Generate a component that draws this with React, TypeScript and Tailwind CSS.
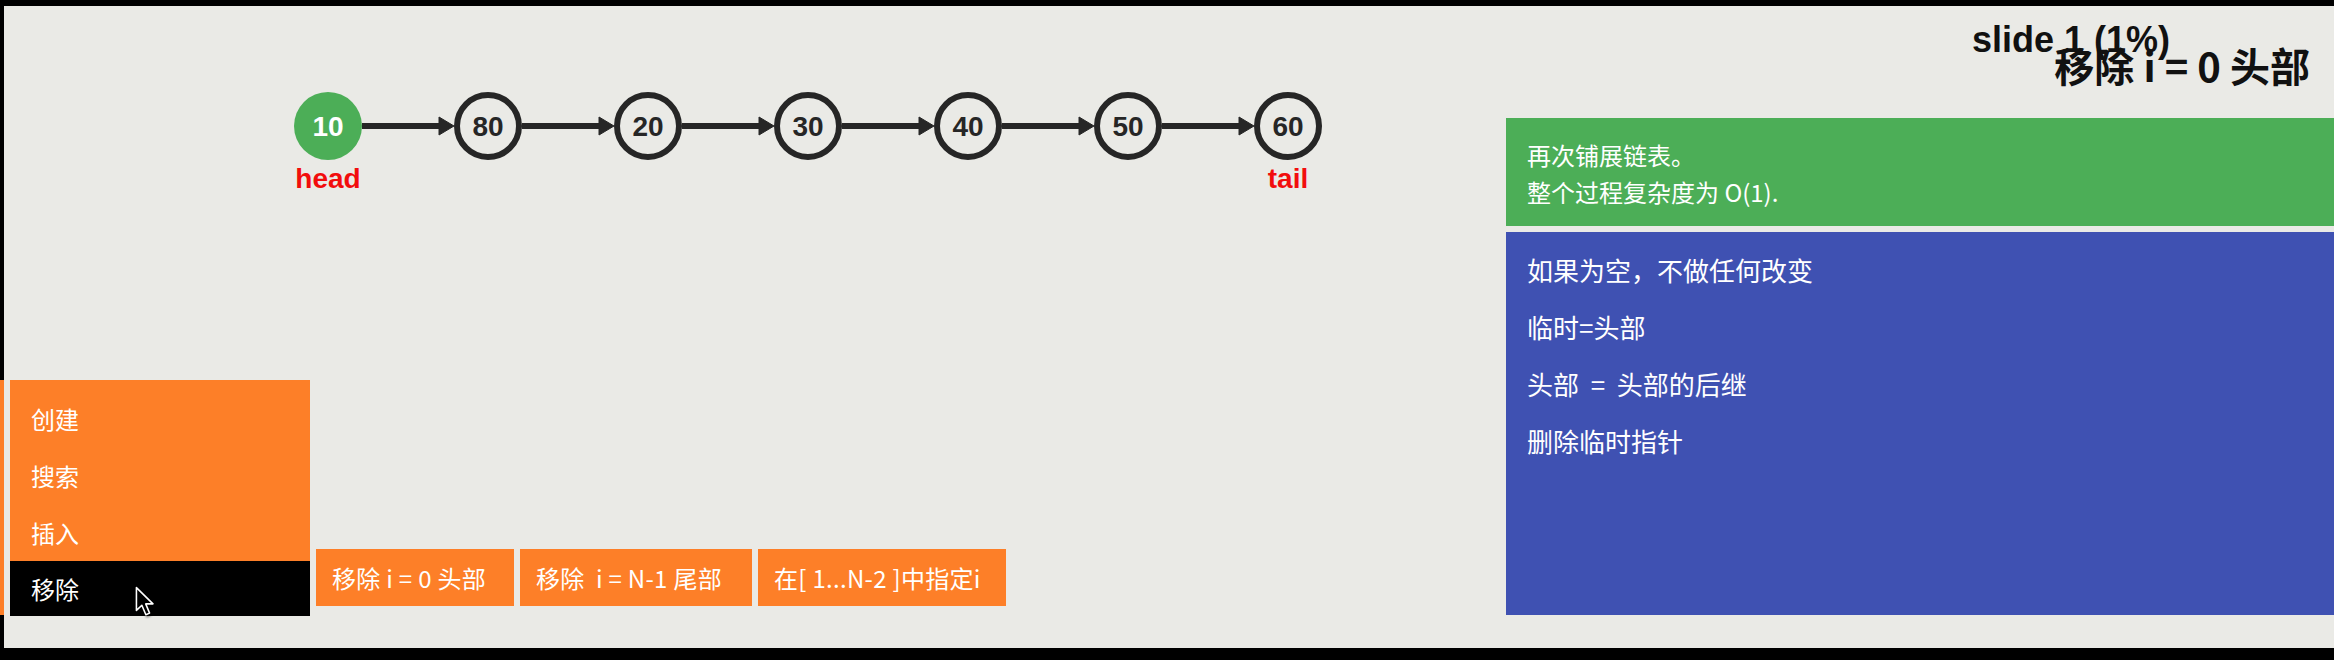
const nodes = [10, 80, 20, 30, 40, 50, 60];
const NODE_X0 = 328;
const NODE_GAP = 160;
const NODE_Y = 126;

const menuItems = ['创建', '搜索', '插入'];

const actions = [
  { label: '移除 i = 0 头部', w: 'w-[198px]' },
  { label: '移除  i = N-1 尾部', w: 'w-[232px]' },
  { label: '在[ 1...N-2 ]中指定i', w: 'w-[248px]' },
];

const steps = ['如果为空，不做任何改变', '临时=头部', '头部  =  头部的后继', '删除临时指针'];

function LinkedList() {
  return (
    <svg width={1502} height={220} viewBox="4 6 1502 220" className="block">
      {nodes.slice(0, -1).map((_, i) => {
        const x1 = NODE_X0 + i * NODE_GAP + 34;
        const tip = NODE_X0 + (i + 1) * NODE_GAP - 34;
        return (
          <g key={i} fill="#262626" stroke="#262626">
            <line x1={x1} y1={NODE_Y} x2={tip - 13} y2={NODE_Y} strokeWidth={6} />
            <polygon points={`${tip - 15},${NODE_Y - 9} ${tip},${NODE_Y} ${tip - 15},${NODE_Y + 9}`} strokeWidth={1} />
          </g>
        );
      })}
      {nodes.map((v, i) => {
        const cx = NODE_X0 + i * NODE_GAP;
        const head = i === 0;
        return (
          <g key={v}>
            {head ? (
              <circle cx={cx} cy={NODE_Y} r={34} fill="#4cae57" />
            ) : (
              <circle cx={cx} cy={NODE_Y} r={31} fill="#eaeae6" stroke="#262626" strokeWidth={6} />
            )}
            <text
              x={cx}
              y={NODE_Y + 10}
              textAnchor="middle"
              fontFamily="'Liberation Sans', Arial, sans-serif"
              fontWeight={700}
              fontSize={28}
              fill={head ? '#ffffff' : '#262626'}
            >
              {v}
            </text>
          </g>
        );
      })}
      <text x={NODE_X0} y={188} textAnchor="middle" fontFamily="'Liberation Sans', Arial, sans-serif" fontWeight={700} fontSize={28} fill="#f20d0d">
        head
      </text>
      <text x={NODE_X0 + 6 * NODE_GAP} y={188} textAnchor="middle" fontFamily="'Liberation Sans', Arial, sans-serif" fontWeight={700} fontSize={28} fill="#f20d0d">
        tail
      </text>
    </svg>
  );
}

function Cursor() {
  return (
    <svg
      width={20}
      height={31}
      viewBox="0 0 14 21.5"
      className="absolute left-[125px] top-[25px] drop-shadow-[1px_2px_1px_rgba(0,0,0,0.45)]"
    >
      <path d="M1 1 L1 17 L4.8 13.4 L7.6 20 L10.2 18.9 L7.5 12.4 L12.6 12.4 Z" fill="#000000" stroke="#ffffff" strokeWidth={1.1} strokeLinejoin="round" />
    </svg>
  );
}

export default function App() {
  return (
    <div className="w-[2334px] h-[660px] bg-black flex flex-col overflow-hidden font-['Noto_Sans_CJK_SC',sans-serif]">
      <div className="h-[6px] shrink-0" />
      <div className="flex h-[642px]">
        {/* left edge with the collapsed menu tab */}
        <div className="w-[4px] shrink-0 pt-[374px]">
          <div className="h-[235px] bg-[#fd7f28]" />
        </div>

        <div className="flex-1 bg-[#eaeae6] flex flex-col justify-between">
          <LinkedList />
          <div className="flex items-end pl-[6px] pb-[32px]">
            <div className="w-[300px] bg-[#fd7f28] pt-[10px] text-white text-[24px]">
              {menuItems.map((item) => (
                <div key={item} className="h-[57px] leading-[57px] pl-[21px]">
                  {item}
                </div>
              ))}
              <div className="relative h-[55px] leading-[55px] pl-[21px] bg-black">
                移除
                <Cursor />
              </div>
            </div>
            <div className="flex gap-[6px] ml-[6px] mb-[10px]">
              {actions.map((a) => (
                <div
                  key={a.label}
                  className={`${a.w} h-[57px] leading-[57px] bg-[#fd7f28] text-white text-[24px] pl-[16px] whitespace-pre tracking-[0.3px]`}
                >
                  {a.label}
                </div>
              ))}
            </div>
          </div>
        </div>

        <div className="w-[828px] shrink-0 bg-[#eaeae6] flex flex-col">
          <div className="relative h-[112px] shrink-0">
            <div className="absolute right-[164px] top-[16px] text-[36px] leading-none font-bold text-[#111] font-['Liberation_Sans',Arial,sans-serif] whitespace-nowrap">
              slide 1 (1%)
            </div>
            <div className="absolute right-[24px] top-[39px] text-[40px] leading-none font-bold text-[#111] whitespace-pre">
              移除 i = 0 头部
            </div>
          </div>
          <div className="h-[108px] shrink-0 bg-[#4cae57] text-white text-[24px] leading-[37px] pt-[18px] pl-[21px]">
            <div>再次铺展链表。</div>
            <div>整个过程复杂度为 O(1).</div>
          </div>
          <div className="h-[383px] shrink-0 mt-[6px] bg-[#3f51b2] text-white text-[26px] leading-[57px] pt-[9px] pl-[21px]">
            {steps.map((s) => (
              <div key={s} className="whitespace-pre">
                {s}
              </div>
            ))}
          </div>
        </div>
      </div>
      <div className="h-[12px] shrink-0" />
    </div>
  );
}
